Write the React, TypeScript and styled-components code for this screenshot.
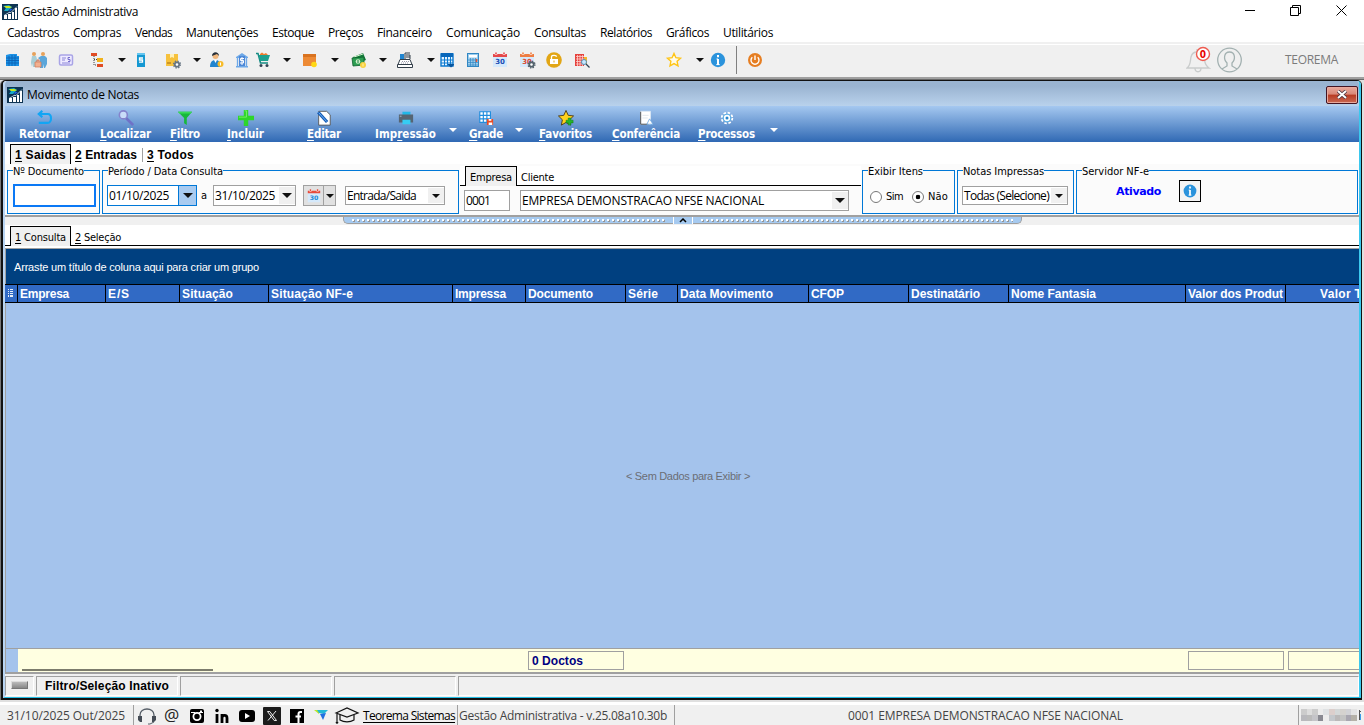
import React, { useLayoutEffect, useRef } from "react";
import styled, { createGlobalStyle, css } from "styled-components";

const GlobalStyle = createGlobalStyle`
  * {
    box-sizing: border-box;
  }
  body {
    margin: 0;
    overflow: hidden;
    background: #f0f0f0;
  }
  u {
    text-decoration: underline;
    text-decoration-skip-ink: none;
    text-underline-offset: 2px;
  }
`;

const segoe = `"Open Sans", "Noto Sans", sans-serif`;
const tahoma = `"DejaVu Sans Condensed", "DejaVu Sans", sans-serif`;
const msSans = `"Liberation Sans", Arial, sans-serif`;

const FixedText = styled.span`
  display: block;
  flex: none;
  white-space: pre;
`;

const Caption = (props: {
  width: number;
  className?: string;
  children: React.ReactNode;
}) => {
  const ref = useRef<HTMLSpanElement>(null);
  useLayoutEffect(() => {
    const el = ref.current;
    if (!el) return;
    el.style.letterSpacing = "0px";
    el.style.width = "max-content";
    const natural = el.getBoundingClientRect().width;
    const count = (el.textContent || "").length;
    el.style.letterSpacing = (props.width - natural) / count + "px";
    el.style.width = props.width + "px";
  });
  return (
    <FixedText ref={ref} className={props.className}>
      {props.children}
    </FixedText>
  );
};

const App$ = styled.div`
  display: flex;
  flex-direction: column;
  width: 1364px;
  height: 725px;
  overflow: hidden;
  background: #f0f0f0;
  color: #000;
`;

const TitleBar = styled.header`
  display: flex;
  align-items: center;
  height: 24px;
  padding: 0 17px 0 2px;
  background: #fff;
  font: 12px/16px ${segoe};
  > svg {
    margin-right: 4px;
  }
`;

const WindowButtons = styled.div`
  display: flex;
  align-items: center;
  gap: 34px;
  height: 20px;
  margin: 0 0 4px auto;
`;

const MenuBar = styled.nav`
  display: flex;
  align-items: center;
  gap: 14px;
  height: 20px;
  padding: 0 7px 1px;
  background: #fff;
  border-bottom: 2px solid #f0f0f0;
  font: 12px/17px ${segoe};
`;

const IconBar = styled.div`
  display: flex;
  align-items: center;
  height: 33px;
  padding-bottom: 2px;
  border-top: 1px solid #fff;
  background: #f0f0f0;
`;

const Slot = styled.span<{ $gap: number }>`
  display: flex;
  flex: none;
  margin-left: ${(p) => p.$gap}px;
`;

const Caret = styled.i<{ $color?: string; $size?: number }>`
  display: block;
  flex: none;
  width: 0;
  height: 0;
  border: ${(p) => p.$size || 4}px solid transparent;
  border-top-color: ${(p) => p.$color || "#111"};
  border-bottom: 0;
`;

const Divider = styled.span`
  width: 1px;
  height: 28px;
  margin-left: 9px;
  background: #808080;
`;

const UserArea = styled.div`
  display: flex;
  align-items: center;
  margin-left: auto;
  padding-right: 26px;
  color: #7b7b7b;
  font: 12px/16px ${segoe};
  > svg {
    margin-right: 6px;
  }
  > svg + svg {
    margin-right: 43px;
  }
`;

const Workspace = styled.main`
  height: 628px;
  padding: 1px 2px 4px 1px;
  border-top: 2px solid #a0a0a0;
  background: linear-gradient(#696969 1px, #e0e0e0 1px calc(100% - 3px), #fff calc(100% - 3px));
`;

const Frame = styled.section`
  display: flex;
  flex-direction: column;
  height: 620px;
  border: 1px solid #111;
  border-width: 1px 1px 2px 2px;
  border-radius: 5px 5px 0 0;
  background: #fff;
  box-shadow: -1px 0 0 #777;
`;

const FrameBody = styled.div`
  display: flex;
  flex-direction: column;
  flex: 1;
  border: solid #b8d4f2;
  border-width: 0 0 0 2px;
  border-right: 2px solid #3bc8ee;
  border-bottom: 1px solid #22bde4;
  border-radius: 4px 4px 0 0;
  background: #fff;
  overflow: hidden;
`;

const FrameTitle = styled.div`
  display: flex;
  align-items: center;
  flex: none;
  height: 25px;
  padding: 2px 1px 0 2px;
  background: linear-gradient(#9ab4d1 20%, #b9d2ec);
  font: 12px/16px ${segoe};
  > svg {
    margin-right: 4px;
  }
`;

const CloseButton = styled.button`
  display: flex;
  align-items: center;
  justify-content: center;
  width: 32px;
  height: 18px;
  margin-left: auto;
  padding: 0;
  border: 1px solid #431422;
  border-radius: 2px;
  background: linear-gradient(#e9aa9d 0, #d98777 45%, #b83a22 50%, #c96a54);
  box-shadow: inset 0 0 0 1px #e9a99c;
`;

const ActionBar = styled.div`
  display: flex;
  flex: none;
  height: 36px;
  padding-left: 14px;
  background: linear-gradient(#a5c8f0, #3069b4);
  color: #fff;
  font: bold 11.5px/14px ${tahoma};
`;

const Action = styled.div<{ $gap: number }>`
  display: flex;
  flex: none;
  flex-direction: column;
  align-items: center;
  margin-left: ${(p) => p.$gap}px;
  padding-top: 4px;
  svg {
    display: block;
    margin-bottom: 1px;
  }
`;

const ActionCaret = styled.div<{ $gap: number }>`
  margin: 22px 0 0 ${(p) => p.$gap}px;
`;

const TabRow = styled.div<{ $height: number; $lined?: boolean }>`
  display: flex;
  flex: none;
  align-items: flex-end;
  height: ${(p) => p.$height}px;
  padding-left: 5px;
  background: ${(p) =>
    p.$lined ? "linear-gradient(#000, #000) left bottom / 100% 1px no-repeat #fff" : "#fff"};
`;

const Tab = styled.div<{ $active?: boolean; $bold?: boolean }>`
  display: flex;
  align-items: center;
  flex: none;
  height: 20px;
  padding: 3px 4px 0;
  color: #000;
  font: 11px/14px ${tahoma};
  ${(p) =>
    p.$bold &&
    css`
      padding-top: 1px;
      font: bold 12px/14px ${msSans};
    `}
  ${(p) =>
    p.$active &&
    css`
      border: 1px solid #000;
      border-bottom: 0;
      background: #f0f0f0;
    `}
`;

const TabSeparator = styled.span`
  width: 1px;
  height: 14px;
  margin: 0 0 2px 1px;
  background: #a0a0a0;
`;

const Filters = styled.div`
  display: flex;
  flex: none;
  align-items: flex-start;
  height: 52px;
  padding: 6px 0 0 2px;
  border-bottom: 1px solid #a0a0a0;
  background: #fbfbfb;
  font: 11px/14px ${tahoma};
`;

const FieldBox = styled.div<{ $width: number; $gap?: number }>`
  display: flex;
  flex: none;
  flex-direction: column;
  width: ${(p) => p.$width}px;
  height: 44px;
  margin-left: ${(p) => p.$gap || 0}px;
  border: 1px solid #0078d7;
`;

const Legend = styled.div`
  align-self: flex-start;
  height: 13px;
  margin: -6px 0 0 5px;
  background: #fbfbfb;
  white-space: nowrap;
`;

const FieldRow = styled.div<{ $pad?: string }>`
  display: flex;
  flex: 1;
  align-items: center;
  padding: ${(p) => p.$pad || "0 3px 0 4px"};
`;

const Input = styled.div<{ $width: number; $tone?: "focus" | "hot"; $gap?: number; $height?: number }>`
  display: flex;
  flex: none;
  align-items: center;
  justify-content: space-between;
  width: ${(p) => p.$width}px;
  height: ${(p) => p.$height || 21}px;
  margin-left: ${(p) => p.$gap || 0}px;
  padding-left: 1px;
  border: 1px solid #a0a0a0;
  background: #fff;
  font: 12px/16px ${segoe};
  ${(p) => p.$tone === "focus" && "border: 2px solid #0a78f5;"}
  ${(p) => p.$tone === "hot" && "border-color: #0078d7;"}
`;

const DropButton = styled.span<{ $hot?: boolean; $width?: number }>`
  display: flex;
  align-items: center;
  justify-content: center;
  width: ${(p) => p.$width || 16}px;
  height: ${(p) => (p.$hot ? "100%" : "calc(100% - 2px)")};
  background: ${(p) => (p.$hot ? "#a9cbf0" : "#f0f0f0")};
  ${(p) => p.$hot && "border-left: 1px solid #0078d7;"}
`;

const CalendarButton = styled.div`
  display: flex;
  flex: none;
  align-items: center;
  width: 33px;
  height: 21px;
  margin-left: 7px;
  border: 1px solid #a0a0a0;
  background: #e1e1e1;
  > span {
    display: flex;
    align-items: center;
    justify-content: center;
    width: 20px;
    height: 19px;
    border-right: 1px solid #a0a0a0;
  }
  > i {
    margin-left: 2px;
  }
`;

const PartyBox = styled.div`
  width: 401px;
  margin: -4px 0 0 1px;
`;

const PartyFields = styled.div`
  display: flex;
  gap: 10px;
  padding: 4px 0 0 4px;
`;

const Radio = styled.span<{ $checked?: boolean; $gap?: number }>`
  flex: none;
  width: 12px;
  height: 12px;
  margin: 0 4px 0 ${(p) => p.$gap || 0}px;
  border: 1px solid #777;
  border-radius: 50%;
  background: ${(p) =>
    p.$checked ? "radial-gradient(#000 0 2px, #fff 2.6px)" : "#fff"};
`;

const InfoButton = styled.div`
  display: flex;
  align-items: center;
  justify-content: center;
  width: 22px;
  height: 22px;
  margin-left: 18px;
  border: 1px solid #000;
  background: #f4f4f4;
`;

const ServerState = styled.div`
  color: #00f;
  font: bold 11px/14px "DejaVu Sans", sans-serif;
  margin-top: 2px;
`;

const SplitterBar = styled.div`
  display: flex;
  flex: none;
  justify-content: center;
  height: 9px;
  padding-left: 1px;
  border-top: 1px solid #a0a0a0;
  background: #f0f0f0;
`;

const Grip = styled.div<{ $width: number; $side: "left" | "right" }>`
  width: ${(p) => p.$width}px;
  height: 7px;
  padding: 2px 8px;
  border-bottom: 1px solid #a0a0a0;
  border-${(p) => p.$side}: 1px solid #a0a0a0;
  border-bottom-${(p) => p.$side}-radius: 5px;
  background: #a6caf0;
  &::before {
    content: "";
    display: block;
    height: 3px;
    background:
      linear-gradient(90deg, #fff 2px, transparent 2px) 0 0 / 5px 2px repeat-x,
      linear-gradient(90deg, transparent 1px, #969696 1px 3px, transparent 3px) 0 1px / 5px 2px repeat-x;
  }
`;

const GripButton = styled.div`
  width: 20px;
  height: 7px;
  border: solid #fff;
  border-width: 0 1px;
  background: #a6caf0;
  svg {
    display: block;
    margin: 1px auto 0;
  }
`;

const GroupPanel = styled.div`
  display: flex;
  flex: none;
  align-items: center;
  height: 36px;
  margin-top: 2px;
  padding-left: 8px;
  border-top: 1px solid #a0a0a0;
  border-left: 1px solid #a0a0a0;
  background: #004080;
  color: #fff;
  font: 11px/14px ${msSans};
`;

const GridHead = styled.div`
  display: flex;
  flex: none;
  height: 19px;
  border: 1px solid #000;
  border-width: 1px 0;
  background: #316ac5;
  color: #fff;
  font: bold 12px/18px ${msSans};
  overflow: hidden;
`;

const HeadCell = styled.div<{ $width: number; $right?: boolean }>`
  display: flex;
  flex: none;
  justify-content: ${(p) => (p.$right ? "flex-end" : "flex-start")};
  width: ${(p) => p.$width}px;
  padding: 0 2px;
  border-right: 1px solid #000;
  overflow: hidden;
`;

const GridBody = styled.div`
  display: flex;
  flex: none;
  align-items: center;
  justify-content: center;
  height: 345px;
  padding-left: 11px;
  border-left: 1px solid #a0a0a0;
  background: #a4c3ec;
  color: #6b6e75;
  font: 11px/14px ${msSans};
`;

const GridFooter = styled.div`
  display: flex;
  flex: none;
  height: 26px;
  border: 1px solid #a0a0a0;
  border-width: 1px 0 2px 1px;
  background: #ffffe1;
  overflow: hidden;
`;

const FooterMark = styled.span`
  flex: none;
  width: 12px;
  background: #a4c3ec;
`;

const FooterLine = styled.span`
  flex: none;
  width: 191px;
  height: 2px;
  margin: 20px 0 0 4px;
  background: #7c7c6c;
`;

const FooterCell = styled.div<{ $gap: number }>`
  flex: none;
  width: 96px;
  height: 19px;
  margin: 2px 0 0 ${(p) => p.$gap}px;
  padding-left: 3px;
  border: 1px solid #a0a0a0;
  color: #000080;
  font: bold 12px/18px ${msSans};
`;

const StatusRow = styled.div`
  display: flex;
  flex: 1;
  gap: 2px;
  padding: 2px 0 1px;
  background: #f0f0f0;
`;

const StatusCell = styled.div<{ $width?: number }>`
  display: flex;
  align-items: center;
  justify-content: center;
  flex: ${(p) => (p.$width ? "none" : 1)};
  width: ${(p) => p.$width}px;
  border: 1px solid #a0a0a0;
  border-right-color: #fff;
  border-bottom-color: #fff;
  font: bold 12px/14px ${msSans};
`;

const Led = styled.span`
  width: 17px;
  height: 8px;
  margin-bottom: 2px;
  border: 1px solid #777;
  border-top-color: #ddd;
  border-left-color: #ddd;
  background: linear-gradient(#bbb, #888);
`;

const BottomBar = styled.footer`
  display: flex;
  align-items: center;
  height: 20px;
  background: #f0f0f0;
  color: #444;
  font: 12px/16px ${segoe};
`;

const BottomCell = styled.div<{ $width: number; $pad?: number }>`
  display: flex;
  flex: none;
  align-items: center;
  width: ${(p) => p.$width}px;
  height: 20px;
  padding: 1px 0 0 ${(p) => p.$pad || 0}px;
  border-right: 1px solid #a0a0a0;
`;

const SiteLink = styled.span`
  margin-left: 3px;
  color: #000;
`;

const Ico = (props: { size?: number; children: React.ReactNode }) => (
  <svg width={props.size || 18} height={props.size || 18} viewBox="0 0 18 18" fill="none">
    {props.children}
  </svg>
);

const AppLogo = () => (
  <svg width="16" height="16" viewBox="0 0 16 16">
    <rect width="16" height="16" fill="#0d3352" />
    <path d="M1 2l6-1 3 2-4 4H2l2-3z" fill="#17a9c9" />
    <path d="M2 2h5l3 1-2 1H4z" fill="#c8e820" />
    <path d="M8 5l3 0-4 3z" fill="#1f5be0" />
    <path d="M2 15v-4h3v4zM6 15V10h3v5zM10 15V8h2v7zM13 15V4h2v11z" fill="#fff" />
    <path d="M2 11.500l5-3h2l6-6" stroke="#dce9f2" strokeWidth="0.8" fill="none" />
  </svg>
);

const Gear = (props: { x: number; y: number; color: string }) => (
  <g transform={`translate(${props.x} ${props.y})`}>
    <circle r="2.2" stroke={props.color} strokeWidth="1.8" fill="#fff" />
    <circle r="3.4" stroke={props.color} strokeWidth="1.4" strokeDasharray="1.4 1.27" />
  </g>
);

const CalendarIcon = (props: { top: string; size?: number; text: string; gear?: boolean }) => (
  <Ico size={props.size}>
    <path d="M2 4h14v12H2z" fill="#d5e9fb" />
    <path d="M2 3h14v3H2z" fill={props.top} />
    <path d="M5 2v2M13 2v2" stroke="#fff" strokeWidth="2.4" />
    <path d="M5 1.500v2M13 1.500v2" stroke={props.top} strokeWidth="1.6" />
    <text x="9" y="13.4" textAnchor="middle" fontFamily="DejaVu Sans" fontWeight="bold" fontSize="7" fill={props.text}>
      30
    </text>
    {props.gear && <Gear x={13.5} y={13.5} color="#53616b" />}
  </Ico>
);

const InfoIcon = (props: { size?: number }) => (
  <Ico size={props.size}>
    <circle cx="9" cy="9" r="7.2" fill="#2b93dc" />
    <path d="M9 4v2.3M9 8v6" stroke="#fff" strokeWidth="2" />
    <path d="M7.5 8H9M7.3 13.6h3.4" stroke="#fff" strokeWidth="1" />
  </Ico>
);

const icons: { [K: string]: React.ReactNode } = {
  company: (
    <Ico>
      <path d="M3 4l4-1h7v2h2v10H3z" fill="#1c92e6" />
      <path d="M3 7h13M3 9.5h13M3 12h13M6 5v10M9 4v11M12 4v11" stroke="#0b62b4" strokeWidth="0.9" />
    </Ico>
  ),
  people: (
    <Ico>
      <circle cx="4" cy="3" r="2" fill="#e5a15b" />
      <circle cx="13" cy="3" r="2" fill="#e5a15b" />
      <path d="M10 17V9L8 7l3-2h4l2 2v6l-2 4h-1v-4l-1 4z" fill="#5ba6da" />
      <path d="M2 5h4l1 3v8H3l-1-4-1 4v-5z" fill="#a8cdd5" />
      <path d="M5 11h6v5H5z" fill="#f3b08f" stroke="#cf7a58" strokeWidth="0.7" />
      <path d="M7 11V9h2v2" stroke="#c86d4c" />
    </Ico>
  ),
  card: (
    <Ico>
      <rect x="2.5" y="4" width="13" height="10" rx="1.5" fill="#eeeaff" stroke="#a9a4e6" strokeWidth="1.5" />
      <path d="M5 7h4M5 9h3M5 12h8" stroke="#8c86d8" />
      <path d="M13 6.5h-2v2h2v2h-2" stroke="#756dce" />
    </Ico>
  ),
  tree: (
    <Ico>
      <path d="M3 2h6v3H3z" fill="#e04c24" />
      <path d="M9 7h6v4H9z" fill="#f0b21b" />
      <path d="M9 13h6v3H9z" fill="#e04c24" />
      <path d="M6 5v9h3M6 8.500h3" stroke="#444" strokeDasharray="1 1" />
    </Ico>
  ),
  service: (
    <Ico>
      <path d="M5 2h8v14H5z" fill="#1598d2" />
      <path d="M5 2h8v2H5z" fill="#64c5ee" />
      <path d="M11 7H7.500v2H10.500v2.200H7" stroke="#fff" strokeWidth="1.3" />
    </Ico>
  ),
  product: (
    <Ico>
      <path d="M2 3h12v12H2z" fill="#f6c13c" />
      <path d="M6 3h4v4l-2-1-2 1z" fill="#fff0b8" />
      <path d="M4 11v2M6 11v2" stroke="#a36a11" />
      <Gear x={13} y={13.500} color="#687684" />
    </Ico>
  ),
  client: (
    <Ico>
      <circle cx="7.500" cy="5" r="3" fill="#f0b77d" />
      <path d="M4 5c0-5 7-5 7 0L9 3z" fill="#26303b" />
      <path d="M2 16c0-6 3-7 5.500-7s5 1 5.500 7z" fill="#2185cf" />
      <path d="M6 9h3l-1.500 3z" fill="#fff" />
      <circle cx="12.500" cy="13" r="3" fill="#f7bc29" />
      <path d="M12.500 11.500v3" stroke="#fff" />
    </Ico>
  ),
  bank: (
    <Ico>
      <path d="M3 6l6-4 6 4v1H3zM3 15h12v1.500H3z" fill="#6da8e8" />
      <path d="M4.500 7v8M7 7v8M11.500 7v8M13.500 7v8" stroke="#6da8e8" strokeWidth="1.3" />
      <path d="M6 5h6v10H6z" fill="#4c87d7" />
      <path d="M11 7.500H7.500v2H10.500v2.500H7M9 6v8" stroke="#fff" />
    </Ico>
  ),
  cart: (
    <Ico>
      <path d="M6 3l2-1.500L10 3l2-1 2 2H6z" fill="#ef7d2e" />
      <path d="M2 2.500h2L6.500 12H14" stroke="#158a83" strokeWidth="1.5" />
      <path d="M4.500 4H16l-2 6H6z" fill="#1ca08f" />
      <circle cx="7" cy="14.500" r="1.500" fill="#345" />
      <circle cx="13" cy="14.500" r="1.500" fill="#345" />
    </Ico>
  ),
  stock: (
    <Ico>
      <path d="M2 3h13v12H2z" fill="#ed8a35" />
      <path d="M2 3h13v3H2z" fill="#d97320" />
      <circle cx="13" cy="13.500" r="2.800" fill="#ffd814" />
    </Ico>
  ),
  money: (
    <Ico>
      <path d="M3 6l10-4 3 7-10 4z" fill="#157c3c" />
      <path d="M4 6l9-3" stroke="#d4f2cd" />
      <path d="M2 7l12-1v8l-11 1z" fill="#2e9e52" stroke="#0c5f2b" strokeWidth="0.8" />
      <circle cx="8" cy="10.500" r="2.300" fill="#d4f2cd" />
      <path d="M8 9v3" stroke="#157c3c" />
      <circle cx="13" cy="14" r="3" fill="#f8d142" />
      <path d="M13 12.500v3" stroke="#fff3b0" />
    </Ico>
  ),
  register: (
    <Ico>
      <path d="M9 8V2h5M14 4v4" stroke="#333f4a" />
      <path d="M10 4h4M10 6h4" stroke="#333f4a" />
      <path d="M4 3h4v5H4z" fill="#2085d0" />
      <path d="M4 8.500h10l2 5H2z" fill="#fff" stroke="#333f4a" />
      <path d="M6 10.500h7M5 12h8" stroke="#99a" strokeDasharray="1 1" />
      <path d="M1.500 13.500h15v3h-15z" fill="#fff" stroke="#333f4a" />
    </Ico>
  ),
  schedule: (
    <Ico>
      <path d="M3 3h12v12H3z" fill="#e5f3ff" stroke="#0d7ad0" strokeWidth="1.4" />
      <path d="M3 2h12v4H3z" fill="#0967ba" />
      <path d="M3 9h12M3 12h12M6.500 6v9M9.500 6v9M12.500 6v9" stroke="#0d7ad0" />
      <path d="M10 13h6v1l-3 2.500-3-2.500z" fill="#08569e" />
    </Ico>
  ),
  calculator: (
    <Ico>
      <rect x="3.500" y="2.500" width="11" height="13" fill="#9ccded" stroke="#3187c3" />
      <path d="M5 4h8v2.500H5z" fill="#fff" />
      <path d="M4 9h10M4 11.500h10M4 14h10M6.500 7v8M9 7v8M11.500 7v8" stroke="#3187c3" strokeWidth="0.7" />
      <path d="M12.500 8v3" stroke="#e65532" strokeWidth="1.500" />
    </Ico>
  ),
  agenda: <CalendarIcon top="#e5484a" text="#1b4eb5" />,
  agendaGear: <CalendarIcon top="#ee7d43" text="#dc4a32" gear />,
  lock: (
    <Ico>
      <circle cx="9" cy="9" r="7.800" fill="#e2a615" />
      <path d="M5 8h8v5H5z" fill="#fff" />
      <path d="M6.500 8V5.800c0-2 5-2 5 0" stroke="#fff" strokeWidth="1.300" />
      <path d="M9 9.500v2" stroke="#e2a615" />
    </Ico>
  ),
  search: (
    <Ico>
      <path d="M2 4V3h9v12H2z" fill="#e5433e" />
      <path d="M3 5.500h8M3 8h8M3 10.500h8M3 13h8M4.500 4v11M7 4v11M9.500 4v11" stroke="#ffd1cd" strokeWidth="0.800" />
      <path d="M11 6h3v7h-3z" fill="#f1b62a" />
      <circle cx="11" cy="11" r="2.500" fill="#c8e8ff" stroke="#588eb3" />
      <path d="M13 13l3.500 3.500" stroke="#345" strokeWidth="1.200" />
    </Ico>
  ),
  star: (
    <Ico>
      <path d="M9 2.500l1.900 4.200 4.600.5-3.400 3.100.9 4.600L9 12.600l-4 2.300.9-4.600-3.400-3.100 4.600-.5z" fill="#fffbe8" stroke="#ffc414" strokeWidth="1.400" />
    </Ico>
  ),
  info: <InfoIcon />,
  power: (
    <Ico>
      <circle cx="9" cy="9" r="7" fill="#e67e22" />
      <path d="M6.300 6.300a4 4 0 1 0 5.400 0M9 4.500v4.500" stroke="#fff" strokeWidth="1.400" />
    </Ico>
  ),
};

const toolbar: [string, number][] = [
  ["company", 3],
  ["people", 9],
  ["card", 9],
  ["tree", 13],
  ["caret", 12],
  ["service", 6],
  ["product", 14],
  ["caret", 11],
  ["client", 7],
  ["bank", 7],
  ["cart", 3],
  ["caret", 11],
  ["stock", 10],
  ["caret", 12],
  ["money", 11],
  ["caret", 11],
  ["register", 9],
  ["caret", 13],
  ["schedule", 3],
  ["calculator", 8],
  ["agenda", 9],
  ["agendaGear", 9],
  ["lock", 9],
  ["search", 10],
  ["star", 74],
  ["caret", 13],
  ["info", 5],
];

const menu: [string, number][] = [
  ["Cadastros", 52],
  ["Compras", 48],
  ["Vendas", 37],
  ["Manutenções", 72],
  ["Estoque", 42],
  ["Preços", 35],
  ["Financeiro", 55],
  ["Comunicação", 74],
  ["Consultas", 52],
  ["Relatórios", 52],
  ["Gráficos", 43],
  ["Utilitários", 50],
];

const actionIcons: { [K: string]: React.ReactNode } = {
  back: (
    <Ico size={16}>
      <path d="M6 1L2 4.500 6 8M2.500 4.500H12c5 0 5 10 0 10H2" stroke="#12a5f4" strokeWidth="2.400" />
    </Ico>
  ),
  find: (
    <Ico size={16}>
      <path d="M9 9l8 8" stroke="#6f72c7" strokeWidth="3" />
      <circle cx="6" cy="5.500" r="4.500" fill="#c9dcf8" stroke="#8583cc" strokeWidth="1.800" />
    </Ico>
  ),
  filter: (
    <Ico size={16}>
      <path d="M1 2h16l-6 7v8l-3-2V9z" fill="#17b83a" />
      <path d="M1 2h16l-1.500 2h-13z" fill="#38d957" />
    </Ico>
  ),
  add: (
    <Ico size={16}>
      <path d="M6.500 0h5v6.500H18v5h-6.500V18h-5v-6.500H0v-5h6.500z" fill="#2ed62b" />
      <path d="M7.500 1h2v7H1" stroke="#7cf06a" />
    </Ico>
  ),
  edit: (
    <Ico size={16}>
      <path d="M3 1.500h9l4 4V17H3z" fill="#fff" stroke="#555" />
      <path d="M2.500 2.500l10 11" stroke="#145bb8" strokeWidth="3.600" />
      <path d="M3 3l9 10" stroke="#7cc0f8" />
    </Ico>
  ),
  print: (
    <Ico size={16}>
      <path d="M5 2h9v4H5z" fill="#20b8e8" />
      <path d="M1 5h16v9H1z" fill="#566573" />
      <path d="M5 11h9v5H5z" fill="#35ccf4" />
      <path d="M2 7h2" stroke="#b3bec7" />
    </Ico>
  ),
  grid: (
    <Ico size={16}>
      <path d="M2 2h12v12H2z" fill="#fff" stroke="#218ddd" strokeWidth="1.300" />
      <path d="M2 6h12M2 10h12M6 2v12M10 2v12" stroke="#218ddd" strokeWidth="1.300" />
      <path d="M10 10h7v7h-7z" fill="#e84b24" />
      <path d="M12 10h3v2h-3zM12 14h4v3h-4z" fill="#fff" />
    </Ico>
  ),
  favorite: (
    <Ico size={16}>
      <path d="M9 .500l2.500 5.500 6 .700-4.400 4.200 1.100 6L9 14l-5.200 3 1.100-6L.500 6.700l6-.700z" fill="#ffd21c" stroke="#493712" strokeWidth="1" />
      <path d="M11.500 9h3v2.500H17v3h-2.500V17h-3v-2.500H9v-3h2.500z" fill="#25b52b" stroke="#0c7614" strokeWidth="0.500" />
    </Ico>
  ),
  check: (
    <Ico size={16}>
      <path d="M3 1.500h11V16H3z" fill="#fff" stroke="#dce8f4" />
      <path d="M3 2v14h9" stroke="#444" />
      <path d="M5 6h7M5 9h6" stroke="#dce5ec" />
      <path d="M13 10l4 6H10z" fill="#fff" stroke="#72a9df" />
    </Ico>
  ),
  process: (
    <Ico size={16}>
      <circle cx="9" cy="9" r="6" stroke="#fff" strokeWidth="2" strokeDasharray="2.800 1.910" />
      <circle cx="9" cy="9" r="4.200" fill="#fff" stroke="#5db1e6" strokeWidth="1.300" />
      <circle cx="9" cy="9" r="1.700" fill="#2887cf" />
    </Ico>
  ),
};

const actions: { icon: string; text: string; key: number; width: number; gap: number; drop?: number }[] = [
  { icon: "back", text: "Retornar", key: -1, width: 51, gap: 0 },
  { icon: "find", text: "Localizar", key: 0, width: 51, gap: 30 },
  { icon: "filter", text: "Filtro", key: 0, width: 30, gap: 19 },
  { icon: "add", text: "Incluir", key: 0, width: 37, gap: 27 },
  { icon: "edit", text: "Editar", key: 0, width: 34, gap: 43 },
  { icon: "print", text: "Impressão", key: 3, width: 61, gap: 34, drop: 13 },
  { icon: "grid", text: "Grade", key: 0, width: 34, gap: 12, drop: 12 },
  { icon: "favorite", text: "Favoritos", key: 0, width: 53, gap: 16 },
  { icon: "check", text: "Conferência", key: 0, width: 68, gap: 20 },
  { icon: "process", text: "Processos", key: 0, width: 57, gap: 18, drop: 15 },
];

const columns: { title: string; width: number; text: number; right?: boolean }[] = [
  { title: "Empresa", width: 88, text: 49 },
  { title: "E/S", width: 74, text: 22 },
  { title: "Situação", width: 89, text: 51 },
  { title: "Situação NF-e", width: 184, text: 82 },
  { title: "Impressa", width: 73, text: 51 },
  { title: "Documento", width: 100, text: 65 },
  { title: "Série", width: 52, text: 30 },
  { title: "Data Movimento", width: 131, text: 93 },
  { title: "CFOP", width: 100, text: 33 },
  { title: "Destinatário", width: 100, text: 69 },
  { title: "Nome Fantasia", width: 177, text: 85 },
  { title: "Valor dos Produt", width: 100, text: 95 },
  { title: "Valor Total", width: 101, text: 64, right: true },
];

const Accel = (props: { text: string; at: number }) =>
  props.at < 0 ? (
    <>{props.text}</>
  ) : (
    <>
      {props.text.slice(0, props.at)}
      <u>{props.text[props.at]}</u>
      {props.text.slice(props.at + 1)}
    </>
  );

const SocialIcons = () => (
  <svg width="226" height="20" viewBox="0 0 226 20" fill="none">
    <path d="M6 11V9c0-8 14-8 14 0v2" stroke="#555d66" strokeWidth="1.300" />
    <path d="M4 10h4v6H6l-2-2zM18 10h4l0 4-2 2h-2z" fill="#454c55" />
    <path d="M20 16l-4 2h-2" stroke="#555d66" />
    <text x="30" y="14.500" fontFamily="Open Sans" fontSize="17" fill="#222">
      @
    </text>
    <rect x="56" y="3" width="14" height="14" rx="2" fill="#000" />
    <circle cx="63" cy="10.500" r="3.600" stroke="#fff" strokeWidth="1.800" />
    <path d="M57 6.500h4M65 6.500h4" stroke="#fff" />
    <path d="M67 4.500v2" stroke="#fff" strokeWidth="2" />
    <path d="M83 8v9M88 8v9M88 12c0-3 5-4 5 0v5" stroke="#000" strokeWidth="2.800" />
    <circle cx="83" cy="4.500" r="1.700" fill="#000" />
    <rect x="105" y="4" width="16" height="12" rx="3" fill="#000" />
    <path d="M111 7l5 3-5 3z" fill="#fff" />
    <rect x="129" y="1" width="18" height="18" rx="1" fill="#1c1c1c" />
    <path d="M133.500 5.500h2.300l6.700 9h-2.300zM142 5l-8 9.500" stroke="#fff" strokeWidth="0.900" />
    <rect x="156" y="3" width="14" height="14" fill="#000" />
    <path d="M168 6h-1.500c-1.500 0-2 .8-2 2v9M161.500 10.500h5.500" stroke="#fff" strokeWidth="2" />
    <path d="M180 4l5 0 0 4z" fill="#b8e62a" />
    <path d="M183 4h11l-4 4-5-1z" fill="#22b8d8" />
    <path d="M186 8l6-1-3 7z" fill="#216fe0" />
    <path d="M202 7l11-5 11 5-11 4z" stroke="#111" strokeWidth="1.200" />
    <path d="M206 9v5c4 2.500 10 2.500 14 0V9M203 8v7" stroke="#111" strokeWidth="1.200" />
    <circle cx="203" cy="16.500" r="1.300" fill="#111" />
  </svg>
);

const mosaic = ["#ccc", "#ddd", "#ccc", "#ececec", "#dfe2e4", "#dccfcc", "#d4d8d8", "#d5d2cf", "#d2d2d6", "#e4e4e4", "#b9b9bd", "#bbb", "#c4c4c8", "#8a8a92", "#ededed", "#c4c8cc", "#bbb9b9", "#c3c3c3", "#a9a6b0", "#b5b1a8"];

const MaskedUser = () => (
  <svg width="62" height="20" viewBox="0 0 62 20" shapeRendering="crispEdges">
    {mosaic.map((fill, i) => (
      <rect key={i} x={2 + (i % 10) * 5.6} y={i < 10 ? 4 : 10} width="6" height="6" fill={fill} />
    ))}
    <path d="M60 5v10M60 6h2M60 11h2" stroke="#555" />
    <path d="M61 9v6" stroke="#3a9be8" />
  </svg>
);

const App = () => {
  return (
    <App$>
      <GlobalStyle />
      <TitleBar>
        <AppLogo />
        <Caption width={116}>Gestão Administrativa</Caption>
        <WindowButtons>
          <svg width="11" height="11" viewBox="0 0 11 11">
            <path d="M0 5.500h10" stroke="#000" />
          </svg>
          <svg width="11" height="11" viewBox="0 0 11 11" fill="none" stroke="#000">
            <path d="M.5 2.500h8v8h-8zM2.500 2V.5h8v8H9" />
          </svg>
          <svg width="12" height="11" viewBox="0 0 12 11" stroke="#000">
            <path d="M1.500.500l10 10M11.500.500l-10 10" />
          </svg>
        </WindowButtons>
      </TitleBar>
      <MenuBar>
        {menu.map(([title, width]) => (
          <Caption key={title} width={width}>
            {title}
          </Caption>
        ))}
      </MenuBar>
      <IconBar>
        {toolbar.map(([name, gap], i) => (
          <Slot key={`tool-${i}`} $gap={gap}>
            {name === "caret" ? <Caret /> : icons[name]}
          </Slot>
        ))}
        <Divider />
        <Slot $gap={9}>{icons.power}</Slot>
        <UserArea>
          <svg width="25" height="28" viewBox="0 0 25 28" fill="none">
            <path d="M1 22c4-3 3-7 4-11 1-4 4-5 6-5s6 1 7 5c1 4 0 8 5 11z" stroke="#c9cccc" strokeWidth="1.300" />
            <path d="M9 22c0 5 6 5 6 0M11 6V3" stroke="#c9cccc" strokeWidth="1.300" />
            <circle cx="17" cy="8" r="6.500" fill="#fff" stroke="#ee5b50" strokeWidth="1.400" />
            <text x="17" y="11.500" textAnchor="middle" fontFamily="DejaVu Sans Condensed" fontWeight="bold" fontSize="10" fill="#e80000">
              0
            </text>
          </svg>
          <svg width="25" height="26" viewBox="0 0 25 26" fill="none" stroke="#a3b1b1" strokeWidth="1.300">
            <circle cx="12.500" cy="13" r="11.800" />
            <path d="M5 22l5-3v-3c-4-4-3-11 2.500-11s6.500 7 2.500 11v3l5 3" />
          </svg>
          <Caption width={53}>TEOREMA</Caption>
        </UserArea>
      </IconBar>
      <Workspace>
        <Frame>
          <FrameBody>
            <FrameTitle>
              <AppLogo />
              <Caption width={112}>Movimento de Notas</Caption>
              <CloseButton>
                <svg width="12" height="9" viewBox="0 0 12 9">
                  <path d="M2 1l8 7M10 1L2 8" stroke="#4b3340" strokeWidth="3.600" />
                  <path d="M2 1l8 7M10 1L2 8" stroke="#fff" strokeWidth="2" />
                </svg>
              </CloseButton>
            </FrameTitle>
            <ActionBar>
              {actions.map((e) => (
                <React.Fragment key={e.text}>
                  <Action $gap={e.gap}>
                    <Slot $gap={0}>{actionIcons[e.icon]}</Slot>
                    <Caption width={e.width}>
                      <Accel text={e.text} at={e.key} />
                    </Caption>
                  </Action>
                  {e.drop && (
                    <ActionCaret $gap={e.drop}>
                      <Caret $color="#fff" />
                    </ActionCaret>
                  )}
                </React.Fragment>
              ))}
            </ActionBar>
            <TabRow $height={22}>
              <Tab $active $bold>
                <Caption width={51}>
                  <Accel text="1 Saidas" at={0} />
                </Caption>
              </Tab>
              <Tab $bold>
                <Caption width={62}>
                  <Accel text="2 Entradas" at={0} />
                </Caption>
              </Tab>
              <TabSeparator />
              <Tab $bold>
                <Caption width={47}>
                  <Accel text="3 Todos" at={0} />
                </Caption>
              </Tab>
            </TabRow>
            <Filters>
              <FieldBox $width={93}>
                <Legend>
                  <Caption width={71}>Nº Documento</Caption>
                </Legend>
                <FieldRow $pad="0 0 0 5px">
                  <Input $width={83} $height={23} $tone="focus" />
                </FieldRow>
              </FieldBox>
              <FieldBox $width={357} $gap={2}>
                <Legend>
                  <Caption width={115}>Período / Data Consulta</Caption>
                </Legend>
                <FieldRow>
                  <Input $width={90} $tone="hot">
                    <Caption width={60}>01/10/2025</Caption>
                    <DropButton $hot $width={18}>
                      <Caret $size={5} />
                    </DropButton>
                  </Input>
                  <Slot $gap={4}>
                    <Caption width={7}>a</Caption>
                  </Slot>
                  <Input $width={83} $gap={5}>
                    <Caption width={60}>31/10/2025</Caption>
                    <DropButton>
                      <Caret $size={5} />
                    </DropButton>
                  </Input>
                  <CalendarButton>
                    <span>
                      <CalendarIcon top="#e74c3c" text="#1989d8" size={16} />
                    </span>
                    <Caret />
                  </CalendarButton>
                  <Input $width={100} $gap={9} $height={19}>
                    <Caption width={69}>Entrada/Saida</Caption>
                    <DropButton>
                      <Caret />
                    </DropButton>
                  </Input>
                </FieldRow>
              </FieldBox>
              <PartyBox>
                <TabRow $height={20} $lined>
                  <Tab $active>
                    <Caption width={42}>Empresa</Caption>
                  </Tab>
                  <Tab>
                    <Caption width={33}>Cliente</Caption>
                  </Tab>
                </TabRow>
                <PartyFields>
                  <Input $width={46}>
                    <Caption width={24}>0001</Caption>
                  </Input>
                  <Input $width={329}>
                    <Caption width={242}>EMPRESA DEMONSTRACAO NFSE NACIONAL</Caption>
                    <DropButton>
                      <Caret $size={5} />
                    </DropButton>
                  </Input>
                </PartyFields>
              </PartyBox>
              <FieldBox $width={93} $gap={1}>
                <Legend>
                  <Caption width={55}>Exibir Itens</Caption>
                </Legend>
                <FieldRow $pad="3px 0 0 7px">
                  <Radio />
                  <Caption width={17}>Sim</Caption>
                  <Radio $checked $gap={9} />
                  <Caption width={20}>Não</Caption>
                </FieldRow>
              </FieldBox>
              <FieldBox $width={117} $gap={2}>
                <Legend>
                  <Caption width={81}>Notas Impressas</Caption>
                </Legend>
                <FieldRow>
                  <Input $width={106} $height={19}>
                    <Caption width={85}>Todas (Selecione)</Caption>
                    <DropButton>
                      <Caret />
                    </DropButton>
                  </Input>
                </FieldRow>
              </FieldBox>
              <FieldBox $width={282} $gap={2}>
                <Legend>
                  <Caption width={67}>Servidor NF-e</Caption>
                </Legend>
                <FieldRow $pad="0 0 9px 39px">
                  <ServerState>
                    <Caption width={45}>Ativado</Caption>
                  </ServerState>
                  <InfoButton>
                    <InfoIcon size={16} />
                  </InfoButton>
                </FieldRow>
              </FieldBox>
            </Filters>
            <SplitterBar>
              <Grip $width={330} $side="left" />
              <GripButton>
                <svg width="8" height="5" viewBox="0 0 8 5" fill="none">
                  <path d="M1 4l3-3 3 3" stroke="#000" strokeWidth="1.500" />
                </svg>
              </GripButton>
              <Grip $width={329} $side="right" />
            </SplitterBar>
            <TabRow $height={21} $lined>
              <Tab $active>
                <Caption width={51}>
                  <Accel text="1 Consulta" at={0} />
                </Caption>
              </Tab>
              <Tab>
                <Caption width={46}>
                  <Accel text="2 Seleção" at={0} />
                </Caption>
              </Tab>
            </TabRow>
            <GroupPanel>
              <Caption width={245}>Arraste um título de coluna aqui para criar um grupo</Caption>
            </GroupPanel>
            <GridHead>
              <HeadCell $width={13}>
                <svg width="9" height="15" viewBox="0 0 9 15" shapeRendering="crispEdges">
                  <path d="M1 4.500h1M1 6.500h1M1 8.500h1M1 10.500h1M1 12.500h1M3 4.500h4M3 6.500h4M3 8.500h4M3 10.500h4M3 12.500h4" stroke="#fff" />
                </svg>
              </HeadCell>
              {columns.map((c) => (
                <HeadCell key={c.title} $width={c.width} $right={c.right}>
                  <Caption width={c.text}>{c.title}</Caption>
                </HeadCell>
              ))}
            </GridHead>
            <GridBody>
              <Caption width={124}>{"< Sem Dados para Exibir >"}</Caption>
            </GridBody>
            <GridFooter>
              <FooterMark />
              <FooterLine />
              <FooterCell $gap={315}>
                <Caption width={51}>0 Doctos</Caption>
              </FooterCell>
              <FooterCell $gap={564} />
              <FooterCell $gap={4} />
            </GridFooter>
            <StatusRow>
              <StatusCell $width={29}>
                <Led />
              </StatusCell>
              <StatusCell $width={142}>
                <Caption width={124}>Filtro/Seleção Inativo</Caption>
              </StatusCell>
              <StatusCell $width={152} />
              <StatusCell $width={122} />
              <StatusCell />
            </StatusRow>
          </FrameBody>
        </Frame>
      </Workspace>
      <BottomBar>
        <BottomCell $width={134} $pad={7}>
          <Caption width={118}>31/10/2025 Out/2025</Caption>
        </BottomCell>
        <BottomCell $width={324}>
          <SocialIcons />
          <SiteLink>
            <Caption width={92}>
              <u>Teorema Sistemas</u>
            </Caption>
          </SiteLink>
        </BottomCell>
        <BottomCell $width={217} $pad={1}>
          <Caption width={208}>Gestão Administrativa - v.25.08a10.30b</Caption>
        </BottomCell>
        <BottomCell $width={624} $pad={173}>
          <Caption width={275}>0001 EMPRESA DEMONSTRACAO NFSE NACIONAL</Caption>
        </BottomCell>
        <MaskedUser />
      </BottomBar>
    </App$>
  );
};

export default App;
